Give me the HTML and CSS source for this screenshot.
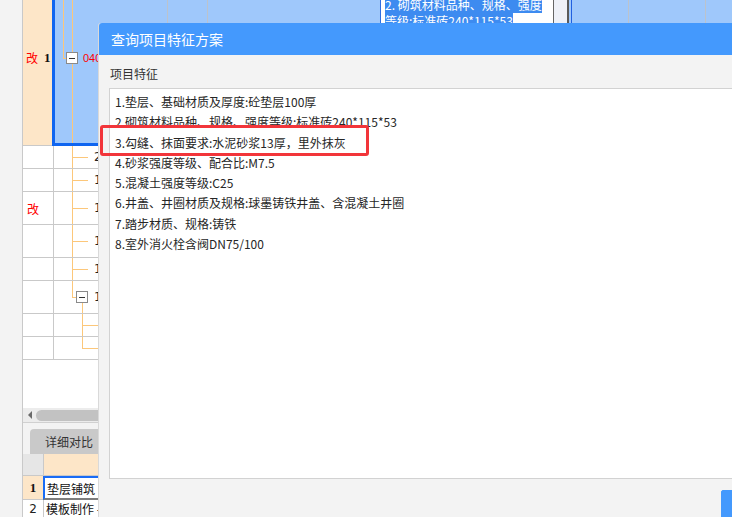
FILE: index.html
```html
<!DOCTYPE html>
<html lang="zh-CN">

<head>
    <meta charset="UTF-8">
    <meta name="viewport" content="width=device-width, initial-scale=1.0">
    <title>查询项目特征方案</title>
    <link rel="stylesheet" href="styles.css">
</head>

<body>

    <div class="app">
        <div class="gutter"></div>

        <div class="sheet">
            <!-- selected row with the cell editor -->
            <div class="row-top">
                <div class="head-sel"><span class="mark">改</span><b class="num-b">1</b></div>
                <div class="sel-area">
                    <div class="sel-cell tree-top">
                        <span class="fold"></span>
                        <span class="code">040103001001</span>
                    </div>
                    <div class="sel-cell w-40"></div>
                    <div class="sel-cell w-172"></div>
                    <div class="editor">
                        <div><span class="hl">2. 砌筑材料品种、规格、强度</span></div>
                        <div><span class="hl">等级:标准砖240*115*53</span></div>
                    </div>
                    <div class="editor-side"></div>
                    <div class="sel-cell w-60 edge"></div>
                    <div class="sel-cell w-77"></div>
                    <div class="sel-cell grow"></div>
                </div>
            </div>

            <div class="row h-23">
                <div class="hcell"></div>
                <div class="tcell t-leaf">2</div>
            </div>
            <div class="row h-23">
                <div class="hcell"></div>
                <div class="tcell t-leaf">1</div>
            </div>
            <div class="row h-33">
                <div class="hcell">改</div>
                <div class="tcell t-leaf">1</div>
            </div>
            <div class="row h-33">
                <div class="hcell"></div>
                <div class="tcell t-leaf">1</div>
            </div>
            <div class="row h-23">
                <div class="hcell"></div>
                <div class="tcell t-leaf">1</div>
            </div>
            <div class="row h-33">
                <div class="hcell"></div>
                <div class="tcell t-open"><span class="fold"></span><span class="open-num">1</span></div>
            </div>
            <div class="row h-23">
                <div class="hcell"></div>
                <div class="tcell t-sub"></div>
            </div>
            <div class="row h-23">
                <div class="hcell"></div>
                <div class="tcell t-last"></div>
            </div>

            <div class="blank"></div>

            <div class="hscroll">
                <span class="arrow"></span>
                <span class="thumb"></span>
            </div>

            <div class="tabs">
                <div class="tab">详细对比</div>
            </div>

            <div class="detail">
                <div class="d-row d-head">
                    <div class="d-num"></div>
                    <div class="d-cell"></div>
                </div>
                <div class="d-row d-sel">
                    <div class="d-num"><b class="num-b">1</b></div>
                    <div class="d-cell">垫层铺筑</div>
                </div>
                <div class="d-row d-last">
                    <div class="d-num">2</div>
                    <div class="d-cell">模板制作 - 垫层</div>
                </div>
            </div>
        </div>
    </div>

    <!-- dialog -->
    <div class="dialog">
        <div class="dialog-title">查询项目特征方案</div>
        <div class="dialog-body">
            <div class="field-label">项目特征</div>
            <div class="feature-box">
                <div>1.垫层、基础材质及厚度:砼垫层100厚</div>
                <div>2.砌筑材料品种、规格、强度等级:标准砖240*115*53</div>
                <div>3.勾缝、抹面要求:水泥砂浆13厚，里外抹灰</div>
                <div>4.砂浆强度等级、配合比:M7.5</div>
                <div>5.混凝土强度等级:C25</div>
                <div>6.井盖、井圈材质及规格:球墨铸铁井盖、含混凝土井圈</div>
                <div>7.踏步材质、规格:铸铁</div>
                <div>8.室外消火栓含阀DN75/100</div>
            </div>
            <div class="dialog-foot">
                <button class="btn btn-primary">确定</button>
                <button class="btn">取消</button>
            </div>
        </div>
        <div class="mark-box"></div>
    </div>

</body>

</html>
```

FILE: styles.css
```css
* {
    box-sizing: border-box;
}

html,
body {
    margin: 0;
}

body {
    width: 732px;
    height: 517px;
    overflow: hidden;
    position: relative;
    font-family: "Noto Sans CJK SC", sans-serif;
    font-size: 12px;
    color: #222;
    background-color: #f3f3f3;
}

.app {
    display: flex;
    height: 517px;
}

.gutter {
    width: 22px;
    flex: none;
    background-color: #f3f3f3;
}

.sheet {
    flex: 1;
    min-width: 0;
    display: flex;
    flex-direction: column;
    background-color: #fff;
    border-left: 1px solid #c9c9c9;
}

/* top (selected) row */
.row-top {
    display: flex;
    height: 146px;
    flex: none;
}

.head-sel {
    width: 29px;
    flex: none;
    display: flex;
    align-items: flex-start;
    gap: 6px;
    padding: 50px 0 0 3px;
    line-height: 16px;
    background-color: #fde6c8;
    border-bottom: 1px solid #c9c9c9;
}

.mark {
    color: #f00;
}

.num-b {
    font-family: "Liberation Serif", serif;
    font-size: 13px;
    color: #111;
}

.sel-area {
    flex: 1;
    display: flex;
    background-color: #9fc8fb;
    border-left: 3px solid #0f65f0;
    border-bottom: 3px solid #0f65f0;
}

.sel-cell {
    flex: none;
    border-right: 1px solid #bcc3cc;
}

.tree-top {
    width: 113px;
    display: flex;
    align-items: flex-start;
    padding: 52px 0 0 11px;
    background:
        linear-gradient(#fcc77a, #fcc77a) 8px 0 / 1px 59px no-repeat,
        linear-gradient(#fcc77a, #fcc77a) 8px 58px / 4px 1px no-repeat,
        linear-gradient(#fcc77a, #fcc77a) 17px 0 / 1px 100% no-repeat;
}

.fold {
    width: 12px;
    height: 12px;
    flex: none;
    border: 1px solid #8a8a8a;
    background: linear-gradient(#333, #333) center / 6px 1px no-repeat, #fff;
}

.code {
    margin-left: 5px;
    line-height: 12px;
    font-family: "Liberation Sans", sans-serif;
    font-size: 11px;
    color: #f00;
    white-space: nowrap;
}

.w-40 {
    width: 40px;
}

.w-172 {
    width: 172px;
    border-right: none;
}

.w-60 {
    width: 60px;
}

.w-77 {
    width: 77px;
}

.grow {
    flex: 1;
    border-right: none;
}

.edge {
    background: linear-gradient(#2160e0, #2160e0) 2px 0 / 1px 100% no-repeat;
}

.editor {
    width: 174px;
    height: 36px;
    flex: none;
    margin-top: -3px;
    padding-left: 4px;
    line-height: 16px;
    color: #fff;
    background-color: #fff;
    border-left: 1px solid #2f6fe0;
    border-right: 1px solid #666;
    white-space: nowrap;
}

.hl {
    background-color: #3d8bf0;
}

.editor-side {
    width: 15px;
    height: 40px;
    flex: none;
    background-color: #eef1f8;
    border-right: 2px solid #5a5a5a;
}

/* lower tree rows */
.row {
    display: flex;
    flex: none;
    border-bottom: 1px solid #c9c9c9;
}

.h-23 {
    height: 23px;
}

.h-33 {
    height: 33px;
}

.hcell {
    width: 31px;
    flex: none;
    display: flex;
    align-items: center;
    padding-left: 4px;
    color: #f00;
    border-right: 1px solid #c9c9c9;
}

.tcell {
    width: 60px;
    flex: none;
    display: flex;
    align-items: center;
    padding-left: 40px;
    font-family: "DejaVu Sans", sans-serif;
    font-size: 12px;
    color: #222;
}

.t-leaf {
    background:
        linear-gradient(#fcc77a, #fcc77a) 18px 0 / 1px 100% no-repeat,
        linear-gradient(#fcc77a, #fcc77a) 18px 50% / 16px 1px no-repeat;
}

.t-open {
    padding-left: 22px;
    background:
        linear-gradient(#fcc77a, #fcc77a) 18px 0 / 1px 50% no-repeat,
        linear-gradient(#fcc77a, #fcc77a) 18px 50% / 5px 1px no-repeat,
        linear-gradient(#fcc77a, #fcc77a) 28px 100% / 1px 50% no-repeat;
}

.open-num {
    margin-left: 6px;
}

.t-sub {
    background:
        linear-gradient(#fcc77a, #fcc77a) 28px 0 / 1px 100% no-repeat,
        linear-gradient(#fcc77a, #fcc77a) 28px 50% / 16px 1px no-repeat;
}

.t-last {
    background:
        linear-gradient(#fcc77a, #fcc77a) 28px 0 / 1px 50% no-repeat,
        linear-gradient(#fcc77a, #fcc77a) 28px 50% / 16px 1px no-repeat;
}

.blank {
    flex: 1;
}

/* scrollbar + tabs */
.hscroll {
    height: 15px;
    flex: none;
    display: flex;
    align-items: center;
    padding-left: 5px;
    background-color: #ececec;
    border-bottom: 1px solid #d0d0d0;
}

.arrow {
    width: 0;
    height: 0;
    border-top: 4px solid transparent;
    border-bottom: 4px solid transparent;
    border-right: 4px solid #6a6a6a;
}

.thumb {
    flex: 1;
    height: 11px;
    margin-left: 4px;
    border-radius: 6px 0 0 6px;
    background-color: #c2c2c2;
}

.tabs {
    height: 31px;
    flex: none;
    display: flex;
    align-items: flex-end;
    padding-left: 7px;
    background-color: #f3f3f3;
}

.tab {
    width: 80px;
    height: 25px;
    padding-left: 15px;
    line-height: 25px;
    font-size: 12px;
    color: #333;
    background-color: #c9c9c9;
    border-radius: 4px 0 0 0;
}

/* detail grid */
.detail {
    flex: 1;
    display: flex;
    flex-direction: column;
}

.d-row {
    display: flex;
    border-bottom: 1px solid #c9c9c9;
}

.d-head {
    height: 22px;
}

.d-sel {
    height: 24px;
    border-bottom: none;
}

.d-last {
    flex: 1;
    border-bottom: none;
}

.d-num {
    width: 21px;
    flex: none;
    display: flex;
    align-items: center;
    justify-content: center;
    font-family: "DejaVu Sans", sans-serif;
    font-size: 12px;
    border-right: 1px solid #c9c9c9;
}

.d-head .d-num {
    background-color: #e6e6e6;
}

.d-head .d-cell {
    background-color: #fde6c8;
}

.d-sel .d-num {
    background-color: #fde6c8;
    border-bottom: 1px solid #c9c9c9;
}

.d-cell {
    flex: 1;
    display: flex;
    align-items: center;
    padding-left: 2px;
    font-size: 12px;
    color: #111;
    white-space: nowrap;
}

.d-sel .d-cell {
    margin-left: -1px;
    border-top: 2px solid #1a6cf5;
    border-left: 2px solid #1a6cf5;
    border-bottom: 2px solid #7d7d7d;
}

/* dialog */
.dialog {
    position: absolute;
    left: 98px;
    top: 23px;
    width: 790px;
    height: 520px;
    display: flex;
    flex-direction: column;
    background-color: #f3f3f3;
    border-left: 1px solid #d9d9d9;
    border-radius: 3px 0 0 0;
}

.dialog-title {
    height: 32px;
    flex: none;
    padding-left: 12px;
    line-height: 32px;
    font-size: 14px;
    color: #fff;
    background-color: #4499fd;
    border-radius: 3px 0 0 0;
}

.dialog-body {
    display: flex;
    flex-direction: column;
    padding: 10px 13px 0 10px;
}

.field-label {
    padding-left: 1px;
    line-height: 17px;
    color: #333;
}

.feature-box {
    height: 391px;
    margin-top: 6px;
    padding: 3px 5px;
    line-height: 20.3px;
    color: #262626;
    background-color: #fff;
    border: 1px solid #d2d2d2;
}

.dialog-foot {
    display: flex;
    justify-content: flex-end;
    gap: 10px;
    padding-top: 11px;
}

.btn {
    width: 72px;
    height: 30px;
    font-family: inherit;
    font-size: 12px;
    color: #333;
    background-color: #fff;
    border: 1px solid #ccc;
    border-radius: 2px;
}

.btn-primary {
    color: #fff;
    background-color: #4499fd;
    border-color: #4499fd;
}

.mark-box {
    position: absolute;
    left: 1px;
    top: 102px;
    width: 269px;
    height: 31px;
    border: 3px solid #f2353a;
    border-radius: 3px;
}
```
